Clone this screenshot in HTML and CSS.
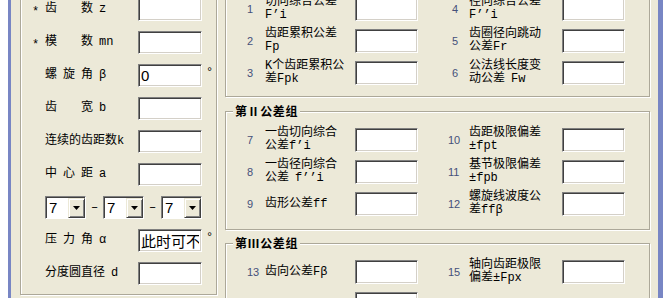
FILE: index.html
```html
<!DOCTYPE html>
<html lang="zh-CN">
<head>
    <meta charset="UTF-8">
    <meta name="viewport" content="width=device-width, initial-scale=1.0">
    <title>齿轮公差</title>
    <link rel="stylesheet" href="styles.css">
</head>
<body>
    <div class="window">
        <div class="panel">
            <!-- gear parameters -->
            <div class="params">
                <span class="star">*</span>
                <span class="plabel">齿    数 z</span>
                <input class="box" type="text">

                <span class="star">*</span>
                <span class="plabel">模    数 mn</span>
                <input class="box" type="text">

                <span class="plabel">螺 旋 角 β</span>
                <input class="box" type="text" value="0">
                <span class="deg">°</span>

                <span class="plabel">齿    宽 b</span>
                <input class="box" type="text">

                <span class="plabel">连续的齿距数k</span>
                <input class="box" type="text">

                <span class="plabel">中 心 距 a</span>
                <input class="box" type="text">

                <div class="combos">
                    <div class="combo"><span class="cval">7</span><span class="cbtn"><svg width="7" height="4" viewBox="0 0 7 4"><polygon points="0,0 7,0 3.5,4" fill="#000"/></svg></span></div>
                    <span class="dash">–</span>
                    <div class="combo"><span class="cval">7</span><span class="cbtn"><svg width="7" height="4" viewBox="0 0 7 4"><polygon points="0,0 7,0 3.5,4" fill="#000"/></svg></span></div>
                    <span class="dash">–</span>
                    <div class="combo"><span class="cval">7</span><span class="cbtn"><svg width="7" height="4" viewBox="0 0 7 4"><polygon points="0,0 7,0 3.5,4" fill="#000"/></svg></span></div>
                </div>

                <span class="plabel">压 力 角 α</span>
                <input class="box" type="text" value="此时可不用输入">
                <span class="deg">°</span>

                <span class="plabel">分度圆直径 d</span>
                <input class="box" type="text">
            </div>

            <!-- tolerance groups -->
            <div class="tcol">
                <div class="tgroup g1">
                    <div class="gtitle">第Ⅰ公差组</div>
                    <div class="tgrid">
                        <span class="num">1</span>
                        <span class="tl">切向综合公差<br>F’i</span>
                        <input class="box" type="text">
                        <span class="num r one">4</span>
                        <span class="tl">径向综合公差<br>F’’i</span>
                        <input class="box" type="text">

                        <span class="num">2</span>
                        <span class="tl">齿距累积公差<br>Fp</span>
                        <input class="box" type="text">
                        <span class="num r one">5</span>
                        <span class="tl">齿圈径向跳动<br>公差Fr</span>
                        <input class="box" type="text">

                        <span class="num">3</span>
                        <span class="tl">K个齿距累积公<br>差Fpk</span>
                        <input class="box" type="text">
                        <span class="num r one">6</span>
                        <span class="tl">公法线长度变<br>动公差 Fw</span>
                        <input class="box" type="text">
                    </div>
                </div>

                <div class="tgroup g2">
                    <div class="gtitle">第Ⅱ公差组</div>
                    <div class="tgrid">
                        <span class="num">7</span>
                        <span class="tl">一齿切向综合<br>公差f’i</span>
                        <input class="box" type="text">
                        <span class="num r">10</span>
                        <span class="tl">齿距极限偏差<br>±fpt</span>
                        <input class="box" type="text">

                        <span class="num">8</span>
                        <span class="tl">一齿径向综合<br>公差 f’’i</span>
                        <input class="box" type="text">
                        <span class="num r">11</span>
                        <span class="tl">基节极限偏差<br>±fpb</span>
                        <input class="box" type="text">

                        <span class="num">9</span>
                        <span class="tl">齿形公差ff</span>
                        <input class="box" type="text">
                        <span class="num r">12</span>
                        <span class="tl">螺旋线波度公<br>差ffβ</span>
                        <input class="box" type="text">
                    </div>
                </div>

                <div class="tgroup g3">
                    <div class="gtitle">第Ⅲ公差组</div>
                    <div class="tgrid">
                        <span class="num">13</span>
                        <span class="tl">齿向公差Fβ</span>
                        <input class="box" type="text">
                        <span class="num r">15</span>
                        <span class="tl">轴向齿距极限<br>偏差±Fpx</span>
                        <input class="box" type="text">

                        <input class="box next" type="text">
                    </div>
                </div>
            </div>
        </div>
    </div>
</body>
</html>
```

FILE: styles.css
```css
body {
    margin: 0;
    background: #fff;
    font-family: "Liberation Mono", "Noto Sans CJK SC", monospace;
    font-size: 12px;
    word-spacing: -1.2px;
    color: #000;
    overflow: hidden;
}

.window {
    box-sizing: border-box;
    width: 655px;
    height: 298px;
    margin-left: 8px;
    border-left: 3px solid #7886c4;
    border-right: 5px solid #7886c4;
    background: #ece9d8;
    overflow: hidden;
}

.panel {
    display: flex;
    align-items: flex-start;
    gap: 8px;
    margin-top: -22px;
    padding-left: 9px;
}

/* etched group frames */
.params,
.tgroup {
    box-sizing: border-box;
    border: 1px solid #aca899;
    box-shadow: inset 1px 1px 0 #fff, 1px 1px 0 #fff;
}

.params {
    width: 197px;
    padding: 19px 0 9px 11px;
    display: grid;
    grid-template-columns: 13px 93px 64px auto;
    grid-auto-rows: 23px;
    row-gap: 10px;
    align-items: center;
}

.star {
    grid-column: 1;
    margin-top: 6px;
    line-height: 13px;
}

.plabel {
    grid-column: 2;
    white-space: pre;
    line-height: 13px;
}

.deg {
    align-self: start;
    margin-top: 3px;
    padding-left: 4px;
    line-height: 13px;
}

.box {
    box-sizing: border-box;
    width: 64px;
    height: 23px;
    margin: 0;
    padding: 0 2px;
    border: 1px solid;
    border-color: #808080 #fff #fff #808080;
    box-shadow: inset 1px 1px 0 #404040, inset -1px -1px 0 #d4d0c8;
    background: #fff;
    font-family: "Liberation Sans", "Noto Sans CJK SC", sans-serif;
    font-size: 15px;
    word-spacing: 0;
    outline: none;
}

.combos {
    grid-column: 2 / 5;
    display: flex;
    align-items: center;
}

.combo {
    box-sizing: border-box;
    width: 41px;
    height: 23px;
    display: flex;
    border: 1px solid;
    border-color: #808080 #fff #fff #808080;
    box-shadow: inset 1px 1px 0 #404040;
    background: #fff;
}

.cval {
    flex: 1;
    padding: 1px 0 0 3px;
    font-family: "Liberation Sans", sans-serif;
    font-size: 15px;
    line-height: 20px;
}

.cbtn {
    box-sizing: border-box;
    width: 17px;
    margin: 1px 0 0;
    display: flex;
    align-items: center;
    justify-content: center;
    border: 1px solid;
    border-color: #ece9d8 #404040 #404040 #ece9d8;
    box-shadow: inset 1px 1px 0 #fff, inset -1px -1px 0 #808080;
    background: #ece9d8;
}

.dash {
    width: 17px;
    text-align: center;
}

/* tolerance groups */
.tcol {
    width: 425px;
    margin-top: 2px;
    display: flex;
    flex-direction: column;
}

.tgroup {
    width: 100%;
}

.g1 {
    padding-bottom: 11px;
}

.g2 {
    margin-top: 14px;
    padding-bottom: 13px;
}

.g3 {
    margin-top: 13px;
    padding-bottom: 12px;
}

.gtitle {
    width: fit-content;
    margin: -8px 0 0 7px;
    padding: 0 2px;
    background: #ece9d8;
    font-family: "Noto Sans CJK SC", sans-serif;
    font-weight: bold;
    font-size: 12px;
    line-height: 14px;
    letter-spacing: 0.6px;
}

.tgrid {
    margin: 10px 0 0 21px;
    display: grid;
    grid-template-columns: 18px 90px 63px 29px 22px 93px 63px;
    grid-auto-rows: 24px;
    row-gap: 8px;
    align-items: center;
}

.tgrid .box {
    width: 63px;
    height: 24px;
}

.tgrid .next {
    grid-column: 3;
}

.num {
    font-family: "Liberation Sans", sans-serif;
    font-size: 11px;
    color: #45507a;
}

.num.r {
    grid-column: 5;
    padding-left: 1px;
}

.num.one {
    padding-left: 5px;
}

.tl {
    line-height: 13px;
    white-space: nowrap;
}
```
